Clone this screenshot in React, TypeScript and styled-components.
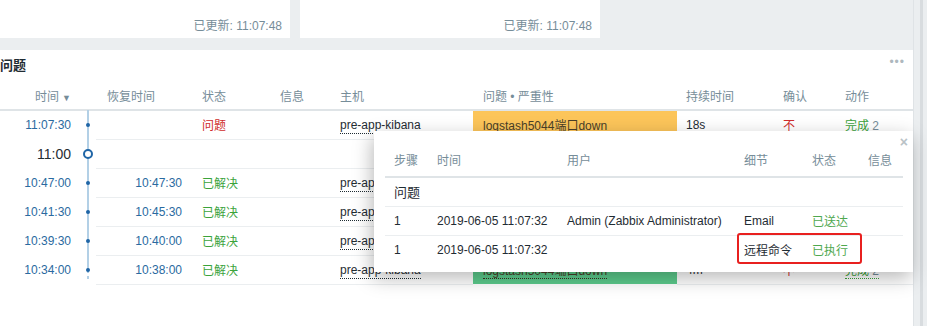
import React from "react";
import styled, { createGlobalStyle } from "styled-components";

const GlobalStyle = createGlobalStyle`
  html, body {
    margin: 0;
    padding: 0;
    background: #ebeef0;
    font-family: "Liberation Sans", Arial, "Noto Sans CJK SC", sans-serif;
    font-size: 12px;
    color: #1f2c33;
  }
  th, td {
    box-sizing: border-box;
  }
`;

const Page = styled.div`
  display: flex;
  width: 927px;
  height: 326px;
  overflow: hidden;
`;

const Dashboard = styled.div`
  width: 913px;
  display: flex;
  flex-direction: column;
  gap: 12px;
`;

const ScrollStrip = styled.div`
  flex: 1;
  background: #ebeef0;
  border-left: 1px solid #dfe3e6;
  display: flex;
  justify-content: center;
  &::after {
    content: "";
    width: 3px;
    margin-left: 2px;
    background: #d8dcdf;
  }
`;

const TopRow = styled.div`
  display: flex;
  gap: 10px;
  height: 38px;
`;

const SmallCard = styled.div<{ $w: number }>`
  width: ${(p) => p.$w}px;
  background: #fff;
  display: flex;
  align-items: flex-end;
  justify-content: flex-end;
  padding: 0 8px 5px 0;
  box-sizing: border-box;
  color: #768d99;
`;

const Card = styled.div`
  flex: 1;
  background: #fff;
  position: relative;
`;

const CardHead = styled.div`
  height: 32px;
  display: flex;
  align-items: center;
  justify-content: space-between;
  padding-right: 8px;
`;

const Title = styled.h4`
  margin: 0;
  font-size: 13px;
  font-weight: bold;
  color: #1f2c33;
  position: relative;
  top: -2px;
`;

const Dots = styled.span`
  color: #aeb8be;
  font-size: 12px;
  letter-spacing: 1px;
  position: relative;
  top: -4px;
`;

const Table = styled.table`
  border-collapse: collapse;
  table-layout: fixed;
  width: 913px;
`;

const Th = styled.th<{ $w: number; $right?: boolean; $pl?: number }>`
  width: ${(p) => p.$w}px;
  height: 28px;
  padding: 0 ${(p) => (p.$right ? 9 : 0)}px 0 ${(p) => p.$pl ?? 0}px;
  text-align: ${(p) => (p.$right ? "right" : "left")};
  font-weight: normal;
  color: #768d99;
  border-bottom: 2px solid #dfe4e7;
  white-space: nowrap;
`;

const Arrow = styled.span`
  font-size: 9px;
  margin-left: 3px;
  color: #768d99;
`;

const Td = styled.td<{ $right?: boolean; $pl?: number; $pr?: number; $line?: boolean }>`
  height: 29px;
  padding: 0 ${(p) => p.$pr ?? 0}px 0 ${(p) => p.$pl ?? 0}px;
  text-align: ${(p) => (p.$right ? "right" : "left")};
  border-bottom: ${(p) => (p.$line === false ? "1px solid transparent" : "1px solid #ebeef0")};
  white-space: nowrap;
  overflow: hidden;
`;

const TimeText = styled.span<{ $big?: boolean }>`
  color: ${(p) => (p.$big ? "#1f2c33" : "#2a6aa0")};
  font-size: ${(p) => (p.$big ? 14 : 12)}px;
`;

const TimelineCell = styled.td<{ $last?: boolean }>`
  padding: 0;
  position: relative;
  border-bottom: 1px solid transparent;
  &::before {
    content: "";
    position: absolute;
    left: 7px;
    top: -1px;
    bottom: -1px;
    width: 2px;
    background: ${(p) =>
      p.$last
        ? "linear-gradient(#b3d0e6 0 60%, transparent 60% 70%, #b3d0e6 70% 80%, transparent 80%)"
        : "#b3d0e6"};
  }
`;

const Dot = styled.span<{ $ring?: boolean }>`
  position: absolute;
  left: ${(p) => (p.$ring ? 3 : 6)}px;
  top: 50%;
  transform: translateY(-50%);
  width: ${(p) => (p.$ring ? 6 : 4)}px;
  height: ${(p) => (p.$ring ? 6 : 4)}px;
  border-radius: 50%;
  background: ${(p) => (p.$ring ? "#fff" : "#1f65a6")};
  border: ${(p) => (p.$ring ? "2px solid #1f65a6" : "none")};
`;

const Status = styled.span<{ $kind: "problem" | "ok" }>`
  color: ${(p) => (p.$kind === "problem" ? "#d02c2c" : "#3ba33b")};
`;

const Host = styled.span`
  border-bottom: 1px dotted #1f2c33;
  padding-bottom: 1px;
`;

const Severity = styled.td<{ $color: string }>`
  background: ${(p) => p.$color};
  padding: 0 0 0 10px;
  border-bottom: 1px solid #fff;
  white-space: nowrap;
  overflow: hidden;
`;

const ProblemName = styled.span`
  border-bottom: 1px dotted #3a3020;
  color: #4a3f28;
`;

const Ack = styled.span`
  color: #d02c2c;
`;

const Action = styled.span`
  color: #3ba33b;
  border-bottom: 1px dotted #3ba33b;
  b {
    font-weight: normal;
    color: #768d99;
  }
`;

/* popup */

const Popup = styled.div`
  position: absolute;
  left: 374px;
  top: 81px;
  width: 539px;
  height: 141px;
  background: #fff;
  box-shadow: -2px 6px 18px rgba(0, 0, 0, 0.28);
  padding: 15px 10px 0 11px;
  box-sizing: border-box;
  z-index: 5;
`;

const Close = styled.span`
  position: absolute;
  right: 5px;
  top: 3px;
  font-size: 14px;
  color: #b9c2c7;
  font-weight: bold;
`;

const PopTable = styled.table`
  border-collapse: collapse;
  table-layout: fixed;
  width: 518px;
`;

const PTh = styled.th<{ $w: number }>`
  width: ${(p) => p.$w}px;
  height: 31px;
  padding: 0 0 4px 9px;
  text-align: left;
  font-weight: normal;
  color: #768d99;
  border-bottom: 2px solid #dfe4e7;
`;

const PTd = styled.td<{ $color?: string; $big?: boolean }>`
  height: 29px;
  padding: 0 0 0 9px;
  color: ${(p) => p.$color ?? "#1f2c33"};
  font-size: ${(p) => (p.$big ? 13 : 12)}px;
  border-bottom: 1px solid #ebeef0;
  white-space: nowrap;
  overflow: hidden;
`;

const PRowLast = styled.tr`
  td {
    border-bottom: none;
  }
`;

const Highlight = styled.div`
  position: absolute;
  left: 363px;
  top: 102px;
  width: 125px;
  height: 31px;
  border: 2px solid #e8201f;
  border-radius: 3px;
  box-sizing: border-box;
`;

type Row = {
  time: string;
  recovery?: string;
  status?: "problem" | "ok";
  host?: string;
  problem?: string;
  sevColor?: string;
  duration?: string;
  ack?: string;
  action?: string;
  marker?: boolean;
};

const rows: Row[] = [
  {
    time: "11:07:30",
    status: "problem",
    host: "pre-app-kibana",
    problem: "logstash5044端口down",
    sevColor: "#fcc55a",
    duration: "18s",
    ack: "不",
    action: "完成",
  },
  { time: "11:00", marker: true },
  { time: "10:47:00", recovery: "10:47:30", status: "ok", host: "pre-app-kibana", problem: "logstash5044端口down", sevColor: "#5ccb8c", duration: "30s", ack: "不", action: "完成" },
  { time: "10:41:30", recovery: "10:45:30", status: "ok", host: "pre-app-kibana", problem: "logstash5044端口down", sevColor: "#5ccb8c", duration: "4m", ack: "不", action: "完成" },
  { time: "10:39:30", recovery: "10:40:00", status: "ok", host: "pre-app-kibana", problem: "logstash5044端口down", sevColor: "#5ccb8c", duration: "30s", ack: "不", action: "完成" },
  { time: "10:34:00", recovery: "10:38:00", status: "ok", host: "pre-app-kibana", problem: "logstash5044端口down", sevColor: "#5ccb8c", duration: "4m", ack: "不", action: "完成" },
];

const App = () => {
  return (
    <Page>
      <GlobalStyle />
      <Dashboard>
        <TopRow>
          <SmallCard $w={290}>已更新: 11:07:48</SmallCard>
          <SmallCard $w={300}>已更新: 11:07:48</SmallCard>
        </TopRow>
        <Card>
          <CardHead>
            <Title>问题</Title>
            <Dots>•••</Dots>
          </CardHead>
          <Table>
            <thead>
              <tr>
                <Th $w={80} $right>
                  时间<Arrow>▼</Arrow>
                </Th>
                <Th $w={16} />
                <Th $w={96} $pl={11}>恢复时间</Th>
                <Th $w={78} $pl={10}>状态</Th>
                <Th $w={60} $pl={10}>信息</Th>
                <Th $w={143} $pl={10}>主机</Th>
                <Th $w={204} $pl={10}>问题 • 严重性</Th>
                <Th $w={99} $pl={9}>持续时间</Th>
                <Th $w={59} $pl={7}>确认</Th>
                <Th $w={78} $pl={10}>动作</Th>
              </tr>
            </thead>
            <tbody>
              {rows.map((r, i) =>
                r.marker ? (
                  <tr key={i}>
                    <Td $right $pr={9} $line={false}>
                      <TimeText $big>{r.time}</TimeText>
                    </Td>
                    <TimelineCell>
                      <Dot $ring />
                    </TimelineCell>
                    <Td colSpan={8} />
                  </tr>
                ) : (
                  <tr key={i}>
                    <Td $right $pr={9} $line={false}>
                      <TimeText>{r.time}</TimeText>
                    </Td>
                    <TimelineCell $last={i === rows.length - 1}>
                      <Dot />
                    </TimelineCell>
                    <Td $right $pr={10}>
                      {r.recovery && <TimeText>{r.recovery}</TimeText>}
                    </Td>
                    <Td $pl={10}>
                      {r.status && (
                        <Status $kind={r.status}>{r.status === "problem" ? "问题" : "已解决"}</Status>
                      )}
                    </Td>
                    <Td $pl={10} />
                    <Td $pl={10}>
                      <Host>{r.host}</Host>
                    </Td>
                    <Severity $color={r.sevColor ?? "#fff"}>
                      <ProblemName>{r.problem}</ProblemName>
                    </Severity>
                    <Td $pl={9}>{r.duration}</Td>
                    <Td $pl={7}>
                      <Ack>{r.ack}</Ack>
                    </Td>
                    <Td $pl={10}>
                      <Action>
                        {r.action} <b>2</b>
                      </Action>
                    </Td>
                  </tr>
                )
              )}
            </tbody>
          </Table>

          <Popup>
            <Close>×</Close>
            <PopTable>
              <thead>
                <tr>
                  <PTh $w={43}>步骤</PTh>
                  <PTh $w={130}>时间</PTh>
                  <PTh $w={177}>用户</PTh>
                  <PTh $w={68}>细节</PTh>
                  <PTh $w={56}>状态</PTh>
                  <PTh $w={44}>信息</PTh>
                </tr>
              </thead>
              <tbody>
                <tr>
                  <PTd colSpan={6} $big>
                    问题
                  </PTd>
                </tr>
                <tr>
                  <PTd>1</PTd>
                  <PTd>2019-06-05 11:07:32</PTd>
                  <PTd>Admin (Zabbix Administrator)</PTd>
                  <PTd>Email</PTd>
                  <PTd $color="#4fa84f">已送达</PTd>
                  <PTd />
                </tr>
                <PRowLast>
                  <PTd>1</PTd>
                  <PTd>2019-06-05 11:07:32</PTd>
                  <PTd />
                  <PTd>远程命令</PTd>
                  <PTd $color="#4fa84f">已执行</PTd>
                  <PTd />
                </PRowLast>
              </tbody>
            </PopTable>
            <Highlight />
          </Popup>
        </Card>
      </Dashboard>
      <ScrollStrip />
    </Page>
  );
};

export default App;
